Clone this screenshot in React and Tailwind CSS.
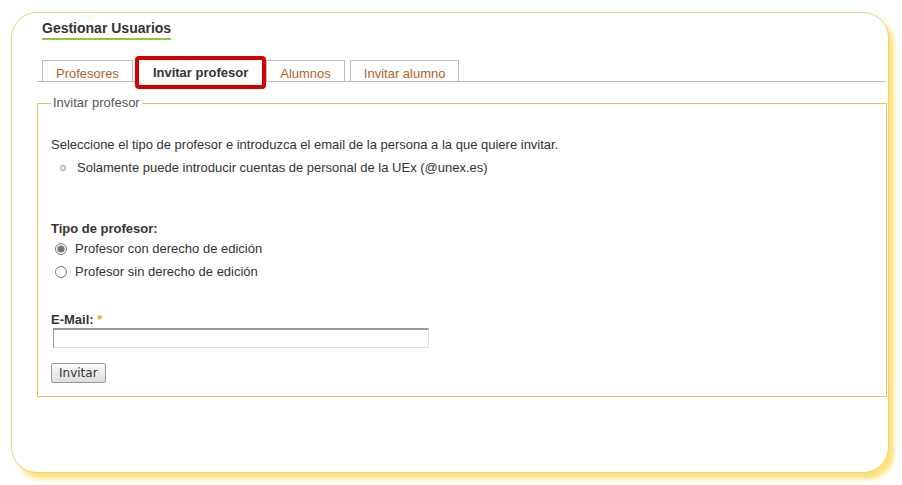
import React, { useState } from 'react';

const tabs = ['Profesores', 'Invitar profesor', 'Alumnos', 'Invitar alumno'];

const App = () => {
  const [tipo, setTipo] = useState('con');
  const [email, setEmail] = useState('');

  return (
    <div className="w-[902px] h-[485px] bg-white pt-[12px] pl-[11px] font-['Liberation_Sans',Arial,sans-serif] text-[13px] text-[#333]">
      <div className="w-[878px] h-[461px] rounded-[26px] border border-[#e6d27c] bg-white shadow-[5px_6px_5px_#fde17a] pt-[6px] pl-[25px] pr-[2px]">
        {/* Title */}
        <div className="pl-[5px]">
          <h1 className="inline-block text-[14px] font-bold text-[#333] leading-[16px] border-b-2 border-[#8cc63e] pb-[2px]">
            Gestionar Usuarios
          </h1>
        </div>

        {/* Tabs */}
        <div className="mt-[11px] flex items-end border-b border-[#bdbdbd] h-[31px] pl-[5px]">
          {tabs.map((t, i) =>
            i === 1 ? (
              <div
                key={t}
                className="relative -mb-[8px] ml-[2px] h-[33px] px-[14px] flex items-center border-[4px] border-[#d20000] rounded-[4px] bg-white font-bold text-[#333]"
              >
                {t}
              </div>
            ) : (
              <div
                key={t}
                className={`h-[21px] px-[13px] pt-[5px] leading-[15px] border border-b-0 border-[#bdbdbd] text-[#b5621f] ${i === 3 ? 'ml-[5px]' : ''}`}
              >
                {t}
              </div>
            )
          )}
        </div>

        {/* Fieldset */}
        <fieldset className="mt-[14px] w-[850px] border border-solid border-[#e2c262] pl-[13px] pr-[10px] pb-[13px]">
          <legend className="px-[2px] text-[#555] leading-[14px]">Invitar profesor</legend>

          <p className="mt-[27px] leading-[16px]">
            Seleccione el tipo de profesor e introduzca el email de la persona a la que quiere invitar.
          </p>
          <div className="mt-[7px] flex items-center leading-[16px]">
            <span className="w-[26px] flex justify-end pr-[11px]">
              <span className="w-[6px] h-[6px] rounded-full border border-[#888]"></span>
            </span>
            <span>Solamente puede introducir cuentas de personal de la UEx (@unex.es)</span>
          </div>

          <div className="mt-[45px] font-bold leading-[16px]">Tipo de profesor:</div>
          <label className="mt-[3px] flex items-center leading-[18px] cursor-pointer">
            <input
              type="radio"
              name="tipo"
              checked={tipo === 'con'}
              onChange={() => setTipo('con')}
              className="ml-[4px] mr-[8px] w-[12px] h-[12px] accent-[#777]"
            />
            Profesor con derecho de edición
          </label>
          <label className="mt-[5px] flex items-center leading-[18px] cursor-pointer">
            <input
              type="radio"
              name="tipo"
              checked={tipo === 'sin'}
              onChange={() => setTipo('sin')}
              className="ml-[4px] mr-[8px] w-[12px] h-[12px] accent-[#777]"
            />
            Profesor sin derecho de edición
          </label>

          <div className="mt-[31px] font-bold leading-[16px]">
            E-Mail: <span className="text-[#f0a030]">*</span>
          </div>
          <input
            type="text"
            value={email}
            onChange={(e) => setEmail(e.target.value)}
            className="block mt-0 ml-[2px] w-[376px] h-[20px] border border-[#ddd] border-t-[2px] border-t-[#999] border-l-[#999] bg-white outline-none"
          />
          <button className="mt-[15px] h-[20px] px-[7px] border border-[#999] rounded-[2px] bg-gradient-to-b from-[#fafafa] to-[#ddd] font-['DejaVu_Sans',sans-serif] text-[12px] text-[#333]">
            Invitar
          </button>
        </fieldset>
      </div>
    </div>
  );
};

export default App;
